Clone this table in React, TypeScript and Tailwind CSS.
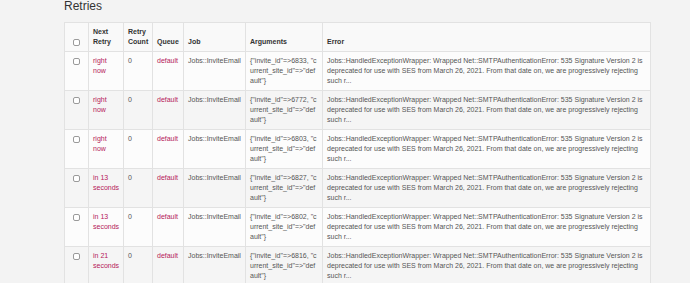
import React from 'react';

const errorText =
  'Jobs::HandledExceptionWrapper: Wrapped Net::SMTPAuthenticationError: 535 Signature Version 2 is deprecated for use with SES from March 26, 2021. From that date on, we are progressively rejecting such r...';

const retries = [
  { when: ['right', 'now'], id: 6833 },
  { when: ['right', 'now'], id: 6772 },
  { when: ['right', 'now'], id: 6803 },
  { when: ['in 13', 'seconds'], id: 6827 },
  { when: ['in 13', 'seconds'], id: 6802 },
  { when: ['in 21', 'seconds'], id: 6816 },
];

const Box = () => (
  <span className="inline-block w-[7px] h-[7px] border border-[#9a9a9a] rounded-[2px] bg-white" />
);

const App = () => {
  return (
    <div
      className="w-[690px] h-[283px] overflow-hidden bg-[#f3f3f3] pl-[64px] text-[#555]"
      style={{ fontFamily: '"Liberation Sans", Arial, sans-serif' }}
    >
      <h3 className="text-[12px] leading-[12px] text-[#333] pt-0 mb-[10px]">Retries</h3>
      <table className="table-fixed border-collapse w-[587px] text-[7px] leading-[10px]">
        <colgroup>
          <col className="w-[24px]" />
          <col className="w-[35px]" />
          <col className="w-[29px]" />
          <col className="w-[31px]" />
          <col className="w-[62px]" />
          <col className="w-[77px]" />
          <col />
        </colgroup>
        <thead>
          <tr className="bg-[#f9f9f9] text-[#333] font-bold">
            <th className="border border-[#e2e2e2] p-[4px] align-bottom text-center">
              <div className="flex justify-center pb-[1px]">
                <Box />
              </div>
            </th>
            <th className="border border-[#e2e2e2] p-[4px] align-bottom text-left">Next Retry</th>
            <th className="border border-[#e2e2e2] p-[4px] align-bottom text-left">Retry Count</th>
            <th className="border border-[#e2e2e2] p-[4px] align-bottom text-left">Queue</th>
            <th className="border border-[#e2e2e2] p-[4px] align-bottom text-left">Job</th>
            <th className="border border-[#e2e2e2] p-[4px] align-bottom text-left">Arguments</th>
            <th className="border border-[#e2e2e2] p-[4px] align-bottom text-left">Error</th>
          </tr>
        </thead>
        <tbody>
          {retries.map((r, i) => (
            <tr key={r.id} className={i % 2 === 0 ? 'bg-[#fcfcfc]' : 'bg-[#f5f5f5]'}>
              <td className="border border-[#e2e2e2] px-[4px] pt-[6px] pb-[4px] align-top">
                <div className="flex justify-center">
                  <Box />
                </div>
              </td>
              <td className="border border-[#e2e2e2] p-[4px] align-top text-[#b5195a]">
                {r.when[0]}
                <br />
                {r.when[1]}
              </td>
              <td className="border border-[#e2e2e2] p-[4px] align-top">0</td>
              <td className="border border-[#e2e2e2] p-[4px] align-top text-[#b5195a]">default</td>
              <td className="border border-[#e2e2e2] p-[4px] align-top whitespace-nowrap">Jobs::InviteEmail</td>
              <td className="border border-[#e2e2e2] p-[4px] align-top break-all">
                {`{"invite_id"=>${r.id}, "current_site_id"=>"default"}`}
              </td>
              <td className="border border-[#e2e2e2] p-[4px] align-top">{errorText}</td>
            </tr>
          ))}
        </tbody>
      </table>
    </div>
  );
};

export default App;
